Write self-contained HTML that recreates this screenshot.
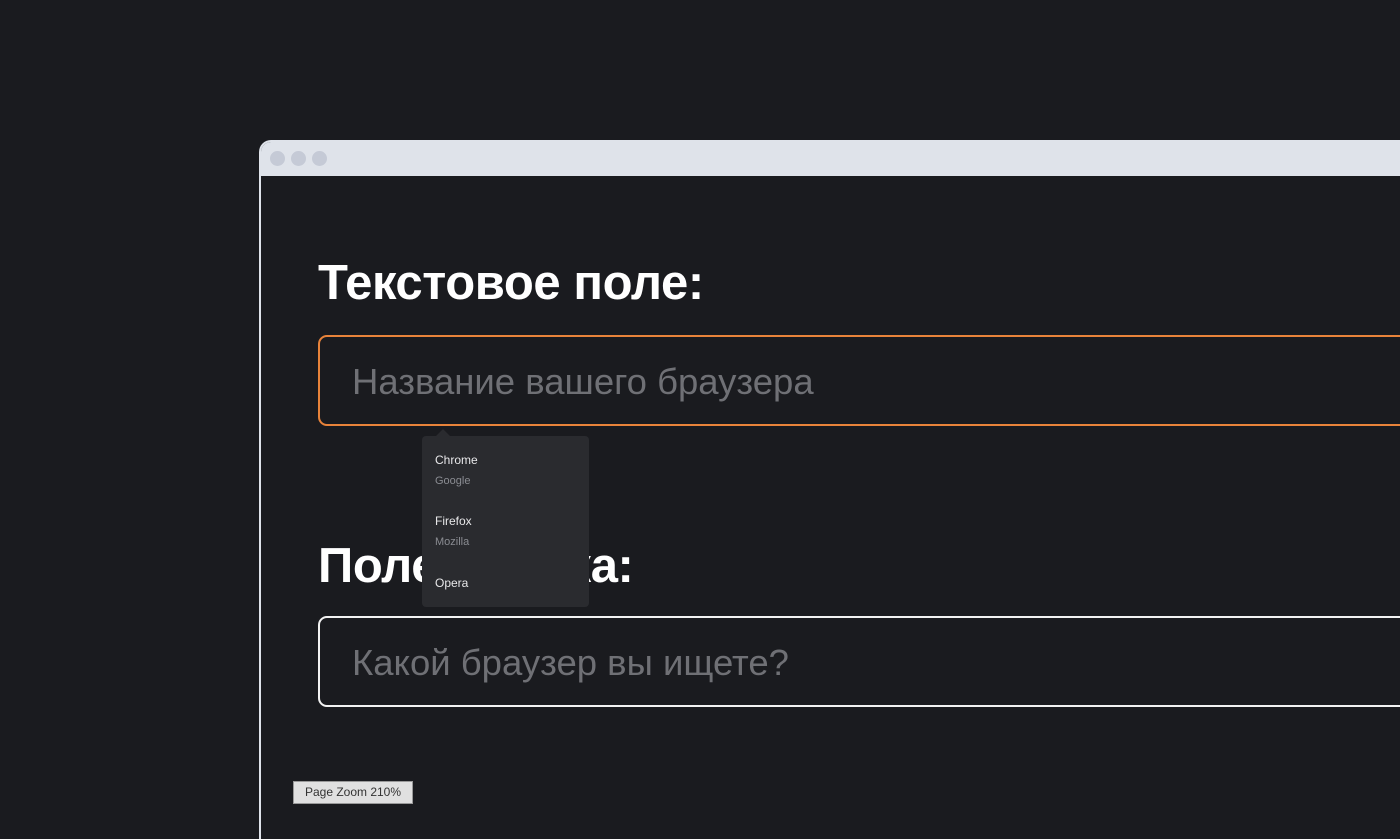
<!DOCTYPE html>
<html><head><meta charset="utf-8"><style>
html,body{margin:0;width:1400px;height:839px;overflow:hidden}
body{background:#1a1b1f;position:relative;font-family:"Liberation Sans",sans-serif}
.frame{position:absolute;left:259px;top:140px;width:1160px;height:699px;border:2px solid #dfe3ea;border-bottom:0;border-right:0;border-radius:12px 0 0 0;background:#1a1b1f;box-sizing:border-box}
.bar{position:absolute;left:0;top:0;right:0;height:34px;background:#dfe3ea;border-radius:10px 0 0 0}
.dot{position:absolute;top:9px;width:15px;height:15px;border-radius:50%;background:#c5cad6}
h1{position:absolute;margin:0;left:318px;font-size:49px;font-weight:bold;color:#fff;letter-spacing:-0.4px;white-space:nowrap}
.inp{position:absolute;left:318px;width:1100px;height:91px;box-sizing:border-box;border:2px solid #e8833a;border-radius:9px}
.ph{position:absolute;left:32px;top:24px;font-size:36.5px;color:#6f7075;white-space:nowrap}
.dd{position:absolute;left:422px;top:436px;width:167px;height:171px;background:#2a2b2f;border-radius:4px}
.dd:before{content:"";position:absolute;left:14px;top:-7px;border:7px solid transparent;border-top:0;border-bottom-color:#2a2b2f}
.t{position:absolute;left:13px;font-size:12px;color:#e8e8ea}
.s{position:absolute;left:13px;font-size:11px;color:#8a8c92}
.btn{position:absolute;left:293px;top:781px;width:120px;height:23px;box-sizing:border-box;background:#e0e0e0;border:1px solid #999;font-size:12px;color:#333;text-align:center;line-height:21px}
</style></head><body>
<div class="frame"><div class="bar"><div class="dot" style="left:9px"></div><div class="dot" style="left:30px"></div><div class="dot" style="left:51px"></div></div></div>
<h1 style="top:255px">Текстовое поле:</h1>
<div class="inp" style="top:335px"><div class="ph">Название вашего браузера</div></div>
<h1 style="top:538px">Поле поиска:</h1>
<div class="inp" style="top:616px;border-color:#f2f2f2"><div class="ph">Какой браузер вы ищете?</div></div>
<div class="dd">
<div class="t" style="top:17px">Chrome</div><div class="s" style="top:39px">Google</div>
<div class="t" style="top:78px">Firefox</div><div class="s" style="top:100px">Mozilla</div>
<div class="t" style="top:140px">Opera</div>
</div>
<div class="btn">Page Zoom 210%</div>
</body></html>
